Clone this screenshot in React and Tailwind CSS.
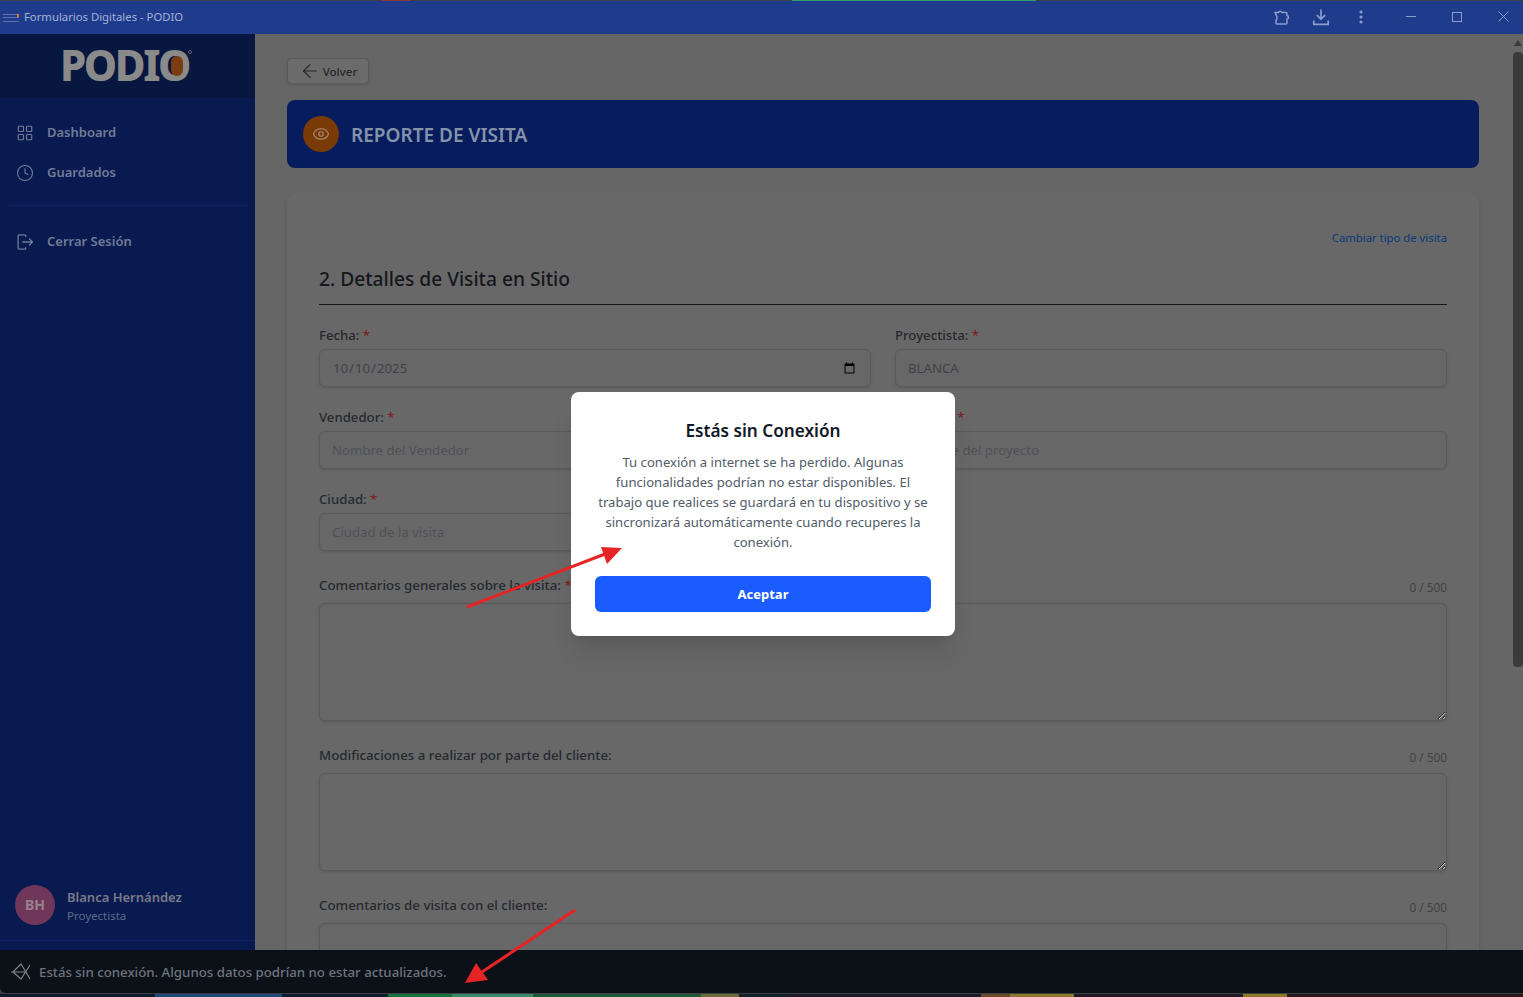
import React from 'react';
import { ArrowLeft, Clock, Eye, LayoutGrid } from 'lucide-react';

function Req() {
  return <span className="text-[#7a1f1f]"> *</span>;
}

function Field({ label, required, placeholder, value, type = 'text' }) {
  return (
    <div>
      <label className="block text-[13.2px] leading-5 font-medium text-[#26292e] mb-1">
        {label}{required && <Req />}
      </label>
      <input
        type={type}
        defaultValue={value}
        placeholder={placeholder}
        className={`w-full h-[38px] px-3 bg-[#676767] border border-[#575a5e] rounded-md text-[13.2px] text-[#3f4247] placeholder:text-[#4f5156] outline-none shadow-sm ${type === 'date' ? 'pt-[2px]' : ''}`}
      />
    </div>
  );
}

function AreaField({ label, required, height }) {
  return (
    <div>
      <div className="flex items-end justify-between mb-[8px] h-5">
        <label className="text-[13.3px] leading-5 font-medium text-[#26292e]">
          {label}{required && <Req />}
        </label>
        <span className="text-[11.8px] -mb-[2px] text-[#3f4247]">0 / 500</span>
      </div>
      <textarea
        style={{ height }}
        className="block w-full bg-[#676767] border border-[#575a5e] rounded-md outline-none shadow-sm"
      />
    </div>
  );
}

function NavItem({ icon, label }) {
  return (
    <div className="flex items-center gap-[13px] px-4 h-10 text-[13px] font-semibold text-[#707c96]">
      {icon}
      <span>{label}</span>
    </div>
  );
}

export default function App() {
  return (
    <div className="relative h-screen flex flex-col overflow-hidden bg-[linear-gradient(to_right,#3a3f4a_0%,#3a3f4a_25%,#8a3a3a_25%,#8a3a3a_27%,#3a3f4a_27%,#3a3f4a_52%,#2f9e6a_52%,#2f9e6a_68%,#3a3f4a_68%)] font-['Noto_Sans','Open_Sans',sans-serif]">
      {/* title bar */}
      <div className="mt-px h-[33px] shrink-0 flex items-center bg-[#1f3b8c] text-[#a3b2d8]">
        <div className="relative ml-[3px] w-[16px] h-[8px] flex flex-col justify-between mr-[5px]">
          <div className="h-px bg-[#5f72aa] w-full" />
          <div className="h-px bg-[#5f72aa] w-full" />
          <div className="h-px bg-[#5f72aa] w-full" />
          <div className="absolute right-0 top-0 w-[2px] h-[3px] bg-[#d9772a]" />
        </div>
        <span className="text-[11.3px]">Formularios Digitales - PODIO</span>
        <div className="ml-auto mb-[2px] flex items-center text-[#8d9dcb]">
          <svg width="18" height="18" viewBox="0 0 18 18" fill="none" stroke="currentColor" strokeWidth="1.5" strokeLinejoin="round" className="mr-[22px]">
            <path d="M3 4.5H6.5a1.8 1.8 0 0 1 3.4 0H14c.6 0 1 .4 1 1v2.3a1.5 1.5 0 0 1 0 3V15c0 .6-.4 1-1 1H5c-.6 0-1-.4-1-1v-2.5c1.5-.6 1.5-4-1-8z" />
          </svg>
          <svg width="18" height="18" viewBox="0 0 18 18" fill="none" stroke="currentColor" strokeWidth="1.7" className="mr-[29px]">
            <path d="M9 1.5v9.5M4.8 7l4.2 4.2L13.2 7M1.8 12.5v3.8h14.4v-3.8" />
          </svg>
          <svg width="4" height="14" viewBox="0 0 4 14" fill="currentColor" className="mr-[43px]">
            <circle cx="2" cy="2" r="1.6" /><circle cx="2" cy="7" r="1.6" /><circle cx="2" cy="12" r="1.6" />
          </svg>
          <div className="w-[10px] h-px bg-current mr-[36px]" />
          <div className="w-[10px] h-[10px] border border-current mr-[36px]" />
          <svg width="11" height="11" viewBox="0 0 11 11" stroke="currentColor" className="mr-[14px]">
            <path d="M.5.5l10 10M10.5.5l-10 10" />
          </svg>
        </div>
      </div>

      {/* body */}
      <div className="flex-1 min-h-0 flex">
        <aside className="w-[255px] shrink-0 flex flex-col bg-[#091a50]">
          <div className="h-[64px] shrink-0 bg-[#08173f] flex items-center justify-center pb-[2px] pr-[6px]">
            <div className="relative text-[42px] leading-none font-extrabold tracking-[-2.4px] text-[#8a8a8a] font-['Noto_Sans',sans-serif]">
              PODIO
              <div className="absolute right-[6px] top-[12px] w-[12px] h-[20px] rounded-full bg-[#7a3c10]" />
              <div className="absolute -right-[3px] top-[6px] w-[4px] h-[4px] rounded-full border border-[#5a6070]" />
            </div>
          </div>
          <nav className="pt-[15px] flex flex-col">
            <NavItem icon={<LayoutGrid size={18} strokeWidth={1.5} />} label="Dashboard" />
            <NavItem icon={<Clock size={18} strokeWidth={1.5} />} label="Guardados" />
          </nav>
          <div className="mx-[7px] mt-[12px] border-t border-[#0c2260]" />
          <div className="mt-[16px]">
            <NavItem
              icon={
                <svg width="18" height="18" viewBox="0 0 24 24" fill="none" stroke="currentColor" strokeWidth="1.7" strokeLinecap="round" strokeLinejoin="round">
                  <path d="M13 4.5V3.8C13 3 12.3 2.5 11.5 2.5H4.5C3.5 2.5 2.8 3.3 2.8 4.2V19.8C2.8 20.7 3.5 21.5 4.5 21.5H11.5C12.3 21.5 13 21 13 20.2V19.5M9 12H22M18 8L22 12L18 16" />
                </svg>
              }
              label="Cerrar Sesión"
            />
          </div>
          <div className="mt-auto h-[56px] flex items-start gap-3 px-[15px] border-b border-[#0c2260] mb-[9px]">
            <div className="w-10 h-10 rounded-full bg-[#70375a] flex items-center justify-center text-sm font-bold text-[#99808f]">
              BH
            </div>
            <div className="pt-[2px]">
              <div className="text-[13px] leading-5 font-semibold text-[#7a7a88]">Blanca Hernández</div>
              <div className="text-[11.5px] leading-4 mt-[1px] text-[#5c6a86]">Proyectista</div>
            </div>
          </div>
        </aside>

        <main className="flex-1 min-w-0 overflow-hidden bg-[#656665] pl-8 pr-[34px] pt-6">
          <button className="h-[26px] w-[82px] flex items-center justify-center gap-[2px] bg-[#6b6b6b] border border-[#5a5a5a] rounded shadow-sm text-[11.5px] font-medium text-[#25272b]">
            <ArrowLeft size={22} strokeWidth={1.3} />
            <span className="pt-px">Volver</span>
          </button>

          <div className="mt-4 h-[68px] flex items-center gap-3 px-4 rounded-lg bg-[#061c5c]">
            <div className="w-9 h-9 rounded-full bg-[#7a3a06] flex items-center justify-center text-[#a98f78]">
              <Eye size={18} strokeWidth={1.4} />
            </div>
            <h1 className="pt-[2px] text-[19px] font-semibold text-[#8593aa]">REPORTE DE VISITA</h1>
          </div>

          <section className="mt-6 rounded-xl bg-[#686868] shadow-md px-8 pt-[38px] pb-6">
            <div className="text-right text-[11.3px] leading-4 text-[#083a78]">Cambiar tipo de visita</div>
            <h2 className="mt-[18px] pb-[10px] border-b border-[#14161b] text-[19.2px] leading-[30px] font-medium text-[#15171c]">
              2. Detalles de Visita en Sitio
            </h2>
            <div className="mt-[20px] grid grid-cols-2 gap-x-6 gap-y-[20px]">
              <Field label="Fecha:" required type="date" value="2025-10-10" />
              <Field label="Proyectista:" required value="BLANCA" />
              <Field label="Vendedor:" required placeholder="Nombre del Vendedor" />
              <Field label="Proyecto:" required placeholder="Nombre del proyecto" />
              <Field label="Ciudad:" required placeholder="Ciudad de la visita" />
            </div>
            <div className="mt-[24px]">
              <AreaField label="Comentarios generales sobre la visita:" required height={118} />
            </div>
            <div className="mt-[24px]">
              <AreaField label="Modificaciones a realizar por parte del cliente:" height={98} />
            </div>
            <div className="mt-[24px]">
              <AreaField label="Comentarios de visita con el cliente:" height={98} />
            </div>
          </section>
        </main>

        <div className="w-[10px] shrink-0 bg-[#656665] flex flex-col items-center">
          <div className="mt-[6px] w-0 h-0 border-x-[4px] border-x-transparent border-b-[6px] border-b-[#3a3a3a]" />
          <div className="mt-[6px] w-full h-[615px] rounded-sm bg-[#3a3a3a]" />
        </div>
      </div>

      {/* offline bar */}
      <div className="h-[44px] shrink-0 flex items-center gap-[8px] pl-[11px] pt-[2px] bg-[#0c1118] rounded-bl-md border-b border-[#3c4046] text-[13.25px] font-medium text-[#6d7480]">
        <svg width="20" height="20" viewBox="0 0 20 20" fill="none" stroke="#7a7f88" strokeWidth="1.2" className="-mt-[2px]">
          <path d="M0 10h15M2 10L10 2L19 17M2 10L10 17L19 3" />
        </svg>
        Estás sin conexión. Algunos datos podrían no estar actualizados.
      </div>
      <div className="h-[3px] shrink-0 bg-[linear-gradient(to_right,#0c1c2e_10.2%,#1d4a7a_10.2%,#1d4a7a_18.5%,#0c1c2e_18.5%,#0c1c2e_25.5%,#12733c_25.5%,#12733c_29.7%,#3a8a6c_29.7%,#3a8a6c_35%,#1a5a38_35%,#1a5a38_46%,#6b6b3a_46%,#6b6b3a_48.5%,#10222c_48.5%,#10222c_51.7%,#1c1c28_51.7%,#1c1c28_64.4%,#6b4a2a_64.4%,#6b4a2a_66.3%,#8a7a2a_66.3%,#8a7a2a_70.5%,#1f1a24_70.5%,#1f1a24_81.6%,#8a7a2a_81.6%,#8a7a2a_84.5%,#2a1a1a_84.5%)]" />

      {/* modal */}
      <div className="absolute left-[571px] top-[392px] w-[384px] h-[244px] bg-white rounded-lg shadow-xl p-6 text-center">
        <h3 className="mt-px text-[17.2px] leading-7 font-semibold text-[#111827]">Estás sin Conexión</h3>
        <p className="mt-[7px] text-[13.1px] leading-5 text-[#525b69]">
          Tu conexión a internet se ha perdido. Algunas funcionalidades podrían no estar disponibles. El trabajo que realices se guardará en tu dispositivo y se sincronizará automáticamente cuando recuperes la conexión.
        </p>
        <button className="mt-[24px] w-full h-9 pt-px rounded-md bg-[#1a5cff] text-white text-[13px] font-bold">Aceptar</button>
      </div>

      {/* annotation arrows */}
      <svg width="1523" height="997" viewBox="0 0 1523 997" className="absolute left-0 top-0 pointer-events-none">
        <path d="M467 607L605 554" stroke="#e52525" strokeWidth="3" />
        <path d="M622 548L601 547L607 564z" fill="#e52525" />
        <path d="M575 910L482 972" stroke="#e52525" strokeWidth="3" />
        <path d="M465 983L476 963L488 980z" fill="#e52525" />
      </svg>
    </div>
  );
}
